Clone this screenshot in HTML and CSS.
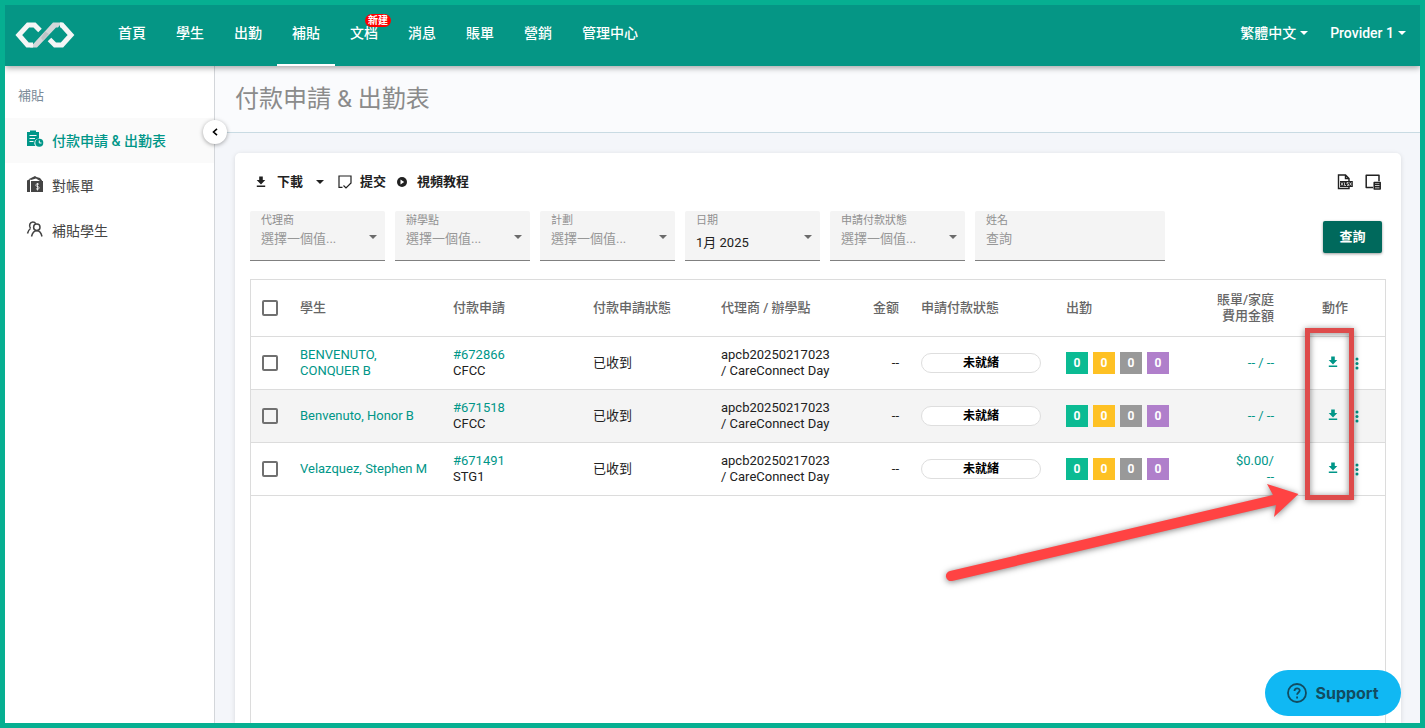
FILE: index.html
```html
<!DOCTYPE html>
<html lang="zh-Hant">
<head>
    <meta charset="UTF-8">
    <meta name="viewport" content="width=device-width, initial-scale=1.0">
    <title>付款申請 &amp; 出勤表</title>
    <link rel="stylesheet" href="styles.css">
</head>
<body>
    <!-- shared icons -->
    <svg class="sprite" aria-hidden="true">
        <symbol id="icon-download" viewBox="0 0 10 12">
            <path d="M3.2 0.500h3.600v3.500H9.300L5 8.500 0.700 4h2.500zM0.800 9.500h8.400v1.500H0.800z" fill="currentColor"/>
        </symbol>
        <symbol id="icon-more" viewBox="0 0 4 14">
            <circle cx="2" cy="3" r="1.500" fill="currentColor"/>
            <circle cx="2" cy="7.500" r="1.500" fill="currentColor"/>
            <circle cx="2" cy="12" r="1.500" fill="currentColor"/>
        </symbol>
        <symbol id="icon-caret" viewBox="0 0 8 4">
            <path d="M0 0h8L4 4z" fill="currentColor"/>
        </symbol>
    </svg>

    <header class="topbar">
        <a class="logo" href="#" aria-label="Home">
            <svg width="60" height="26" viewBox="0 0 60 26">
                <path d="M15 25.500L38 0.500H47L43 5.500H41L22 25.500z" fill="#d3d7d9"/>
                <path d="M26 16L30 9.500L34 12L28 18.500z" fill="#bcc4c6"/>
                <path d="M25 8.500L19.500 3H13L3.800 13L12.500 23H18" fill="none" stroke="#f5f6f6" stroke-width="5"/>
                <path d="M45 3H47L56 13L47 23H40L34.500 17.500" fill="none" stroke="#f5f6f6" stroke-width="5"/>
            </svg>
        </a>
        <nav class="main-nav">
            <a href="#">首頁</a>
            <a href="#">學生</a>
            <a href="#">出勤</a>
            <a href="#" class="active">補貼</a>
            <a href="#">文档<span class="new-badge">新建</span></a>
            <a href="#">消息</a>
            <a href="#">賬單</a>
            <a href="#">營銷</a>
            <a href="#">管理中心</a>
        </nav>
        <div class="user-nav">
            <button type="button">繁體中文<svg class="caret"><use href="#icon-caret"/></svg></button>
            <button type="button">Provider 1<svg class="caret"><use href="#icon-caret"/></svg></button>
        </div>
    </header>

    <div class="layout">
        <aside class="sidebar">
            <h2>補貼</h2>
            <a href="#" class="active">
                <svg width="18" height="18" viewBox="0 0 18 18">
                    <path d="M1 2h3V0.500h6V2h3v6.500a4.500 4.500 0 0 0-3.500 7.500H1z" fill="currentColor"/>
                    <path d="M3.500 5.500h7M3.500 8.500h5.500M3.500 11.500h4" stroke="#fafafa" stroke-width="1.200"/>
                    <circle cx="13.300" cy="12.800" r="4" fill="currentColor"/>
                    <path d="M13.300 10.500v2.500h2.200" stroke="#fafafa" fill="none"/>
                </svg>
                付款申請 &amp; 出勤表
            </a>
            <a href="#">
                <svg width="18" height="18" viewBox="0 0 18 18">
                    <path d="M1 5.500l3-1.500v13H1z" fill="currentColor"/>
                    <path d="M3 4l6-3 1.500 1L14 3l2 2.500V6h1v11H5V6H14L10 3.500 5 5z" fill="currentColor"/>
                    <path d="M13 9.200c-3.500-1.400-4.300 2-1.500 2.300s2 3.700-1.500 2.300M11.500 8v7.500" fill="none" stroke="#fff" stroke-width="0.800"/>
                </svg>
                對帳單
            </a>
            <a href="#">
                <svg width="18" height="18" viewBox="0 0 18 18" fill="none" stroke="currentColor" stroke-width="1.500">
                    <path d="M4.500 8.500C2.500 5.500 4 2 6.800 2c1.500 0 2.500.8 3 1.800M4.500 8.500C3 9.500 2 11.500 1.500 13.500"/>
                    <circle cx="10.800" cy="7.300" r="3.200"/>
                    <path d="M5.500 16.500c1-4 3-5.800 5.300-5.800s4.300 1.800 5.200 5.800"/>
                </svg>
                補貼學生
            </a>
            <button type="button" class="collapse" aria-label="Collapse">
                <svg width="6" height="8" viewBox="0 0 6 8"><path d="M5 0.800L1.500 4L5 7.200" fill="none" stroke="currentColor" stroke-width="1.600"/></svg>
            </button>
        </aside>

        <main>
            <div class="page-title">
                <h1>付款申請 &amp; 出勤表</h1>
            </div>

            <section class="card">
                <div class="toolbar">
                    <button type="button" class="download"><svg width="10" height="12"><use href="#icon-download"/></svg>下載<svg class="caret"><use href="#icon-caret"/></svg></button>
                    <button type="button">
                        <svg width="14" height="14" viewBox="0 0 14 14" fill="none" stroke="currentColor" stroke-width="1.200"><path d="M4.500 12.400H1V1h12v7.500M5.500 10.500L8 13l5-5"/></svg>提交
                    </button>
                    <button type="button" class="video">
                        <svg width="12" height="12" viewBox="0 0 12 12"><circle cx="6" cy="6" r="5" fill="currentColor"/><path d="M4.500 3.500L8.200 6L4.500 8.500z" fill="#fff"/></svg>視頻教程
                    </button>
                    <div class="toolbar-right">
                        <button type="button" aria-label="XLSX">
                            <svg width="16" height="16" viewBox="0 0 16 16" fill="none" stroke="currentColor" stroke-width="1.400">
                                <path d="M12 7V4.500L8.500 1H1.500v13.500H12v-1.500M8.500 1v3.500H12"/>
                                <path d="M3 7h12.800v6H3z" fill="currentColor" stroke="none"/>
                                <path d="M4 8.500l2 3M6 8.500l-2 3M7.500 8.500v3H9M11.500 8.500H10v1.500h1.500v1.500H10M12.700 8.500l1.800 3M14.500 8.500l-1.800 3" stroke="#fff" stroke-width="0.700"/>
                            </svg>
                        </button>
                        <button type="button" aria-label="Columns">
                            <svg width="16" height="16" viewBox="0 0 16 16" fill="none" stroke="currentColor" stroke-width="1.500">
                                <path d="M8 13.500H1.200V1.200H14v6" stroke-linejoin="round"/>
                                <path d="M9.200 8.500h6v6.500h-6zM9.200 10.600h6M9.200 12.800h6" stroke-linejoin="round"/>
                            </svg>
                        </button>
                    </div>
                </div>

                <form class="filters">
                    <div class="field">
                        <label for="agency">代理商</label>
                        <select id="agency"><option>選擇一個值...</option></select>
                        <svg class="caret"><use href="#icon-caret"/></svg>
                    </div>
                    <div class="field">
                        <label for="site">辦學點</label>
                        <select id="site"><option>選擇一個值...</option></select>
                        <svg class="caret"><use href="#icon-caret"/></svg>
                    </div>
                    <div class="field">
                        <label for="program">計劃</label>
                        <select id="program"><option>選擇一個值...</option></select>
                        <svg class="caret"><use href="#icon-caret"/></svg>
                    </div>
                    <div class="field filled">
                        <label for="date">日期</label>
                        <select id="date"><option>1月 2025</option></select>
                        <svg class="caret"><use href="#icon-caret"/></svg>
                    </div>
                    <div class="field">
                        <label for="status">申請付款狀態</label>
                        <select id="status"><option>選擇一個值...</option></select>
                        <svg class="caret"><use href="#icon-caret"/></svg>
                    </div>
                    <div class="field wide">
                        <label for="name">姓名</label>
                        <input id="name" type="text" placeholder="查詢">
                    </div>
                    <button type="button" class="search">查詢</button>
                </form>

                <div class="table-wrap">
                    <table>
                        <colgroup>
                            <col class="c-check"><col class="c-name"><col class="c-claim"><col class="c-state"><col>
                            <col class="c-amount"><col class="c-pay"><col class="c-att"><col class="c-bill"><col class="c-action">
                        </colgroup>
                        <thead>
                            <tr>
                                <th><input type="checkbox" aria-label="全選"></th>
                                <th>學生</th>
                                <th>付款申請</th>
                                <th>付款申請狀態</th>
                                <th>代理商 / 辦學點</th>
                                <th class="right">金额</th>
                                <th>申請付款狀態</th>
                                <th>出勤</th>
                                <th class="right">賬單/家庭<br>費用金額</th>
                                <th class="center">動作</th>
                            </tr>
                        </thead>
                        <tbody>
                            <tr>
                                <td><input type="checkbox" aria-label="BENVENUTO, CONQUER B"></td>
                                <td><a href="#">BENVENUTO, CONQUER B</a></td>
                                <td><a href="#">#672866</a><br>CFCC</td>
                                <td>已收到</td>
                                <td>apcb20250217023<br>/ CareConnect Day</td>
                                <td class="right">--</td>
                                <td><span class="pill">未就緒</span></td>
                                <td><div class="counts"><span class="green">0</span><span class="yellow">0</span><span class="gray">0</span><span class="purple">0</span></div></td>
                                <td class="right"><a href="#">-- / --</a></td>
                                <td><div class="actions"><button type="button" aria-label="下載"><svg width="10" height="12"><use href="#icon-download"/></svg></button><button type="button" aria-label="更多"><svg width="4" height="14"><use href="#icon-more"/></svg></button></div></td>
                            </tr>
                            <tr>
                                <td><input type="checkbox" aria-label="Benvenuto, Honor B"></td>
                                <td><a href="#">Benvenuto, Honor B</a></td>
                                <td><a href="#">#671518</a><br>CFCC</td>
                                <td>已收到</td>
                                <td>apcb20250217023<br>/ CareConnect Day</td>
                                <td class="right">--</td>
                                <td><span class="pill">未就緒</span></td>
                                <td><div class="counts"><span class="green">0</span><span class="yellow">0</span><span class="gray">0</span><span class="purple">0</span></div></td>
                                <td class="right"><a href="#">-- / --</a></td>
                                <td><div class="actions"><button type="button" aria-label="下載"><svg width="10" height="12"><use href="#icon-download"/></svg></button><button type="button" aria-label="更多"><svg width="4" height="14"><use href="#icon-more"/></svg></button></div></td>
                            </tr>
                            <tr>
                                <td><input type="checkbox" aria-label="Velazquez, Stephen M"></td>
                                <td><a href="#">Velazquez, Stephen M</a></td>
                                <td><a href="#">#671491</a><br>STG1</td>
                                <td>已收到</td>
                                <td>apcb20250217023<br>/ CareConnect Day</td>
                                <td class="right">--</td>
                                <td><span class="pill">未就緒</span></td>
                                <td><div class="counts"><span class="green">0</span><span class="yellow">0</span><span class="gray">0</span><span class="purple">0</span></div></td>
                                <td class="right"><a href="#">$0.00/<br>--</a></td>
                                <td><div class="actions"><button type="button" aria-label="下載"><svg width="10" height="12"><use href="#icon-download"/></svg></button><button type="button" aria-label="更多"><svg width="4" height="14"><use href="#icon-more"/></svg></button></div></td>
                            </tr>
                        </tbody>
                    </table>
                </div>
            </section>

            <!-- highlight box and arrow over the action column -->
            <svg class="annotation" width="420" height="270" viewBox="0 0 420 270">
                <rect x="367.500" y="10.500" width="44" height="167" fill="none" stroke="#de4b4b" stroke-width="5"/>
                <path d="M10 251L333 175L327 164L358.500 174L334 197L336 185L12 261A5 5 0 0 1 10 251z" fill="#ff4343"/>
            </svg>
        </main>
    </div>

    <button type="button" class="support">
        <svg width="20" height="20" viewBox="0 0 20 20" fill="none" stroke="currentColor" stroke-width="1.800">
            <circle cx="10" cy="10" r="9"/>
            <path d="M7.500 8c0-3.600 5.200-3.400 5.200-.4 0 1.900-2.600 1.900-2.600 4.100M10.100 13.400v2"/>
        </svg>
        Support
    </button>
</body>
</html>
```
FILE: styles.css
```css
* {
    box-sizing: border-box;
}

body {
    margin: 0;
    height: 100vh;
    display: flex;
    flex-direction: column;
    border: 5px solid #06af91;
    overflow: hidden;
    background-color: #f4f6fa;
    color: #212121;
    font-family: Roboto, "Noto Sans CJK TC", sans-serif;
    font-size: 13px;
    line-height: 16px;
}

a {
    color: #009688;
    text-decoration: none;
}

button {
    display: flex;
    align-items: center;
    padding: 0;
    border: none;
    background: none;
    color: inherit;
    font: inherit;
    cursor: pointer;
}

.sprite {
    position: absolute;
    width: 0;
    height: 0;
}

.caret {
    width: 8px;
    height: 4px;
}

/* top bar */
.topbar {
    position: relative;
    z-index: 2;
    flex: none;
    display: flex;
    height: 61px;
    padding: 0 14px 0 10px;
    background-color: #059685;
    box-shadow: 0 2px 6px rgba(0, 0, 0, 0.35);
    color: #fff;
    font-size: 14px;
    font-weight: 500;
}

.logo {
    display: flex;
    align-items: center;
    margin-right: 28px;
    padding-bottom: 2px;
}

.main-nav {
    display: flex;
}

.main-nav a {
    position: relative;
    display: flex;
    align-items: center;
    padding: 0 15px;
    padding-bottom: 5px;
    color: #fff;
}

.main-nav .active::after {
    content: "";
    position: absolute;
    left: 0;
    right: 0;
    bottom: 0;
    height: 2px;
    background-color: #fff;
}

.new-badge {
    position: absolute;
    top: 9px;
    left: 30px;
    padding: 0 3px;
    border-radius: 7px;
    background-color: #f00;
    font-size: 10px;
    line-height: 13px;
    font-weight: bold;
    white-space: nowrap;
}

.user-nav {
    display: flex;
    gap: 22px;
    margin-left: auto;
    padding-bottom: 5px;
}

.user-nav .caret {
    margin-left: 4px;
}

/* sidebar */
.layout {
    flex: 1;
    display: flex;
    min-height: 0;
}

.sidebar {
    position: relative;
    z-index: 1;
    flex: none;
    width: 210px;
    border-right: 1px solid #d3d6da;
    background-color: #fff;
}

.sidebar h2 {
    margin: 0;
    padding: 22px 13px 14px;
    color: #7b8b99;
    font-size: 13px;
    font-weight: normal;
}

.sidebar a {
    display: flex;
    align-items: center;
    gap: 8px;
    height: 45px;
    padding-left: 21px;
    color: #444;
    font-size: 14px;
}

.sidebar a svg {
    margin-bottom: 4px;
}

.sidebar a.active {
    background-color: #fafafa;
    color: #009688;
    font-weight: 500;
}

.collapse {
    position: absolute;
    top: 54px;
    right: -13px;
    justify-content: center;
    width: 24px;
    height: 24px;
    border-radius: 50%;
    background-color: #fff;
    box-shadow: 0 1px 4px rgba(0, 0, 0, 0.35);
    color: #000;
}

/* content */
main {
    position: relative;
    flex: 1;
    display: flex;
    flex-direction: column;
    min-width: 0;
}

.page-title {
    padding: 17px 20px;
    border-bottom: 1px solid #c9dbe3;
    background-color: #fafbfd;
}

.page-title h1 {
    margin: 0;
    color: #8b8b8b;
    font-size: 24px;
    line-height: 32px;
    font-weight: normal;
}

.card {
    flex: 1;
    display: flex;
    flex-direction: column;
    margin: 20px 19px 0 20px;
    padding: 19px 15px 0;
    border-radius: 5px 5px 0 0;
    background-color: #fff;
    box-shadow: 0 1px 5px rgba(0, 0, 0, 0.12);
}

.toolbar {
    display: flex;
    align-items: center;
    gap: 10px;
    padding: 0 5px 0 6px;
    height: 20px;
    font-weight: bold;
}

.toolbar button {
    gap: 8px;
}

.toolbar .download {
    gap: 11px;
}

.toolbar .video {
    gap: 9px;
}

.toolbar .caret {
    margin: 0 4px 0 2px;
}

.toolbar-right {
    display: flex;
    gap: 12px;
    margin-left: auto;
}

.filters {
    display: flex;
    align-items: center;
    gap: 10px;
    margin-top: 19px;
    padding-right: 4px;
}

.field {
    position: relative;
    width: 135px;
    height: 50px;
    border-bottom: 1px solid #808080;
    border-radius: 2px 2px 0 0;
    background-color: #f4f4f4;
}

.field.wide {
    width: 190px;
}

.field label {
    position: absolute;
    top: 2px;
    left: 11px;
    color: #909090;
    font-size: 11px;
    pointer-events: none;
}

.field select,
.field input {
    appearance: none;
    width: 100%;
    height: 100%;
    padding: 10px 11px 4px;
    border: none;
    background: none;
    color: #979797;
    font: inherit;
}

.field input::placeholder {
    color: #979797;
}

.field.filled select {
    padding-top: 14px;
    padding-bottom: 0;
    color: #212121;
}

.field .caret {
    position: absolute;
    top: 24px;
    right: 8px;
    color: #6b6b6b;
    pointer-events: none;
}

.search {
    justify-content: center;
    width: 59px;
    height: 32px;
    margin: 2px 0 0 auto;
    border-radius: 2px;
    background-color: #00695c;
    box-shadow: 0 1px 3px rgba(0, 0, 0, 0.4);
    color: #fff;
    font-weight: bold;
}

/* table */
.table-wrap {
    flex: 1;
    margin-top: 18px;
    border: 1px solid #dcdcdc;
    border-bottom: none;
}

table {
    width: 100%;
    border-collapse: collapse;
    table-layout: fixed;
}

.c-check { width: 38px; }
.c-name { width: 153px; }
.c-claim { width: 140px; }
.c-state { width: 128px; }
.c-amount { width: 60px; }
.c-pay { width: 145px; }
.c-att { width: 125px; }
.c-bill { width: 105px; }
.c-action { width: 100px; }

th,
td {
    height: 53px;
    padding: 0 11px;
    border-bottom: 1px solid #dcdcdc;
    text-align: left;
    vertical-align: middle;
}

th {
    height: 56px;
    color: #666;
    font-weight: 500;
}

tbody tr:nth-child(even) {
    background-color: #f4f4f4;
}

.right {
    text-align: right;
}

.center {
    text-align: center;
}

td input,
th input {
    appearance: none;
    display: block;
    width: 16px;
    height: 16px;
    margin: 0;
    border: 2px solid #707070;
    border-radius: 2px;
}

.pill {
    display: block;
    width: 120px;
    border: 1px solid #dedede;
    border-radius: 10px;
    background-color: #fff;
    color: #000;
    font-size: 12px;
    line-height: 18px;
    font-weight: bold;
    text-align: center;
}

.counts {
    display: flex;
    gap: 5px;
}

.counts span {
    width: 22px;
    color: #fff;
    font-size: 12px;
    line-height: 22px;
    font-weight: bold;
    text-align: center;
}

.green { background-color: #0bbb93; }
.yellow { background-color: #fec124; }
.gray { background-color: #999; }
.purple { background-color: #b07fcb; }

.actions {
    display: flex;
    align-items: flex-start;
    gap: 17px;
    padding-left: 32px;
    color: #009688;
}

/* overlays */
.annotation {
    position: absolute;
    top: 254px;
    right: 60px;
    filter: drop-shadow(0 1px 3px rgba(0, 0, 0, 0.5));
    pointer-events: none;
}

.support {
    position: fixed;
    right: 24px;
    bottom: 12px;
    z-index: 3;
    justify-content: center;
    gap: 8px;
    width: 136px;
    height: 46px;
    border-radius: 23px;
    background-color: #10b8f3;
    color: #124c60;
    font-family: Inter, sans-serif;
    font-size: 16px;
    font-weight: bold;
}
```
